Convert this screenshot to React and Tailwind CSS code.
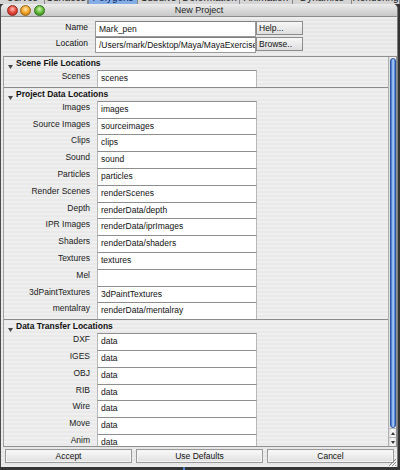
import React from 'react';

// tab strip of the main window, peeking out above the dialog
const tabs = [
  { name: 'Curves', w: 'w-[45px]' },
  { name: 'Surfaces', w: 'w-[43px]' },
  { name: 'Polygons', w: 'w-[50px]', active: true },
  { name: 'Subdivs', w: 'w-[42px]' },
  { name: 'Deformation', w: 'w-[60px]' },
  { name: 'Animation', w: 'w-[53px]' },
  { name: 'Dynamics', w: 'w-[59px]' },
  { name: 'Rendering', w: 'w-[48px]' },
];

const sections = [
  { title: 'Scene File Locations', rows: [['Scenes', 'scenes']] },
  {
    title: 'Project Data Locations',
    rows: [
      ['Images', 'images'],
      ['Source Images', 'sourceimages'],
      ['Clips', 'clips'],
      ['Sound', 'sound'],
      ['Particles', 'particles'],
      ['Render Scenes', 'renderScenes'],
      ['Depth', 'renderData/depth'],
      ['IPR Images', 'renderData/iprImages'],
      ['Shaders', 'renderData/shaders'],
      ['Textures', 'textures'],
      ['Mel', ''],
      ['3dPaintTextures', '3dPaintTextures'],
      ['mentalray', 'renderData/mentalray'],
    ],
  },
  {
    title: 'Data Transfer Locations',
    rows: [
      ['DXF', 'data'],
      ['IGES', 'data'],
      ['OBJ', 'data'],
      ['RIB', 'data'],
      ['Wire', 'data'],
      ['Move', 'data'],
      ['Anim', 'data'],
    ],
  },
];

const pinstripe =
  'bg-[repeating-linear-gradient(180deg,#ededed_0px,#ededed_2px,#e6e6e6_2px,#e6e6e6_4px)]';

function Light({ tone }) {
  return <span className={`block w-[11px] h-[11px] rounded-full border ${tone}`} />;
}

function PathRow({ label, value }) {
  return (
    <div className="flex h-[16.8px]">
      <div className="w-[86px] shrink-0 pt-[1px] text-right leading-[10px] text-[#1a1a1a]">{label}</div>
      <div className="ml-[7px] w-[160px] h-full bg-white border-t border-x border-t-[#8e8e8e] border-x-[#b8b8b8] pl-[3px] pt-[2px] leading-[10px] whitespace-nowrap overflow-hidden">
        {value}
      </div>
    </div>
  );
}

function Section({ title, rows, first }) {
  return (
    <div className={first ? '' : 'border-t border-[#8a8a8a]'}>
      <div className="flex h-[13px] items-start">
        <svg className="ml-[4px] mt-[8px]" width="5" height="4" viewBox="0 0 5 4">
          <polygon points="0,0 5,0 2.5,4" fill="#454545" />
        </svg>
        <span className="ml-[3px] pt-[1px] leading-[10px] font-bold text-[#111]">{title}</span>
      </div>
      {rows.map(([label, value]) => (
        <PathRow key={label} label={label} value={value} />
      ))}
    </div>
  );
}

function FormButton({ children }) {
  return (
    <button className="w-[47px] h-[14px] border border-[#8c8c8c] bg-gradient-to-b from-[#f7f7f7] to-[#dedede] pl-[2px] text-left leading-[12px] text-[8.5px]">
      {children}
    </button>
  );
}

function BarButton({ children }) {
  return (
    <button className="h-[14px] border border-[#9a9a9a] bg-gradient-to-b from-[#fafafa] to-[#e0e0e0] shadow-[inset_0_0_0_1px_#f4f4f4] text-center leading-[12px] text-[8.5px] text-[#111]">
      {children}
    </button>
  );
}

export default function App() {
  return (
    <div className="w-[400px] h-[470px] overflow-hidden bg-[#353535] font-['Liberation_Sans',Arial,sans-serif] text-[8.5px] text-[#111]">
      {/* main window tabs */}
      <div className="h-[4px] overflow-hidden bg-[#d4d4d4]">
        <div className="-mt-[8px] flex h-[12px]">
          {tabs.map((t) => (
            <span
              key={t.name}
              className={`${t.w} shrink-0 text-center text-[10px] leading-[12px] border-r border-[#888] ${
                t.active ? 'bg-[#86aee6] text-[#0c2a66] border-l border-[#3b6cc4]' : 'text-[#222]'
              }`}
            >
              {t.name}
            </span>
          ))}
        </div>
      </div>

      <div className="w-[398px] h-[463px] flex flex-col rounded-t-[5px] overflow-hidden border-l border-r border-l-[#4a4a4a] border-r-[#7c7c7c] bg-[#e8e8e8]">
        {/* title bar */}
        <div className="h-[13px] shrink-0 grid grid-cols-[1fr_auto_1fr] items-center border-b border-[#8c8c8c] bg-gradient-to-b from-[#ececec] to-[#c8c8c8]">
          <div className="flex items-center pl-[6px]">
            <Light tone="border-[#8e2a22] bg-[radial-gradient(circle_at_50%_35%,#ffc2b8_0%,#e6463a_50%,#a3201a_100%)]" />
            <span className="ml-[2px]">
              <Light tone="border-[#9a6410] bg-[radial-gradient(circle_at_50%_35%,#ffe7ad_0%,#f2a52a_50%,#b06a0c_100%)]" />
            </span>
            <span className="ml-[3px]">
              <Light tone="border-[#2f6e1a] bg-[radial-gradient(circle_at_50%_35%,#d2f5ae_0%,#62b93a_50%,#2f7a18_100%)]" />
            </span>
          </div>
          <span className="text-[9px] leading-[12px] text-[#1e1e1e]">New Project</span>
          <div />
        </div>

        <div className={`flex-1 flex flex-col ${pinstripe}`}>
          {/* name / location */}
          <div className="pt-[4px] flex flex-col">
            <div className="flex h-[16px]">
              <div className="w-[87px] pt-[1px] text-right leading-[10px]">Name</div>
              <div className="ml-[7px] w-[161px] h-[16px] bg-white border border-[#9a9a9a] border-t-[#808080] pl-[3px] pt-[2px] leading-[10px]">
                Mark_pen
              </div>
              <FormButton>Help...</FormButton>
            </div>
            <div className="flex h-[16px]">
              <div className="w-[87px] pt-[1px] text-right leading-[10px]">Location</div>
              <div className="ml-[7px] w-[161px] h-[16px] bg-white border border-[#9a9a9a] border-t-[#808080] pl-[3px] pt-[2px] leading-[10px] whitespace-nowrap overflow-hidden">
                /Users/mark/Desktop/Maya/MayaExercises
              </div>
              <FormButton>Browse..</FormButton>
            </div>
          </div>

          {/* scrolling path list */}
          <div className="mt-[3px] ml-[2px] h-[391px] flex border-t border-b border-l border-r border-[#8f8f8f] border-l-[#a0a0a0]">
            <div className="flex-1 overflow-hidden bg-[repeating-linear-gradient(180deg,#efefef_0px,#efefef_2px,#e9e9e9_2px,#e9e9e9_4px)]">
              {sections.map((s, i) => (
                <Section key={s.title} title={s.title} rows={s.rows} first={i === 0} />
              ))}
            </div>
            <div className="w-[8px] flex flex-col border-l border-[#b0b0b0] bg-gradient-to-r from-[#dcdcdc] via-[#fbfbfb] to-[#e4e4e4]">
              <div className="mt-[1px] mx-[0.5px] h-[370px] rounded-full border border-[#2b559f] bg-[linear-gradient(90deg,#3566c4_0%,#86b2ec_35%,#b8d6f7_55%,#6c9ee6_80%,#3a6cc8_100%)]" />
              <div className="flex-1" />
              <div className="h-[9px] border-t border-[#b5b5b5] flex items-center justify-center">
                <svg width="4" height="3" viewBox="0 0 4 3">
                  <polygon points="2,0 4,3 0,3" fill="#333" />
                </svg>
              </div>
              <div className="h-[9px] border-t border-[#b5b5b5] flex items-center justify-center">
                <svg width="4" height="3" viewBox="0 0 4 3">
                  <polygon points="0,0 4,0 2,3" fill="#333" />
                </svg>
              </div>
            </div>
          </div>

          {/* bottom buttons */}
          <div className="relative flex-1 grid grid-cols-3 gap-[4px] pl-[4px] pr-[3px] pt-[2px] items-start">
            <BarButton>Accept</BarButton>
            <BarButton>Use Defaults</BarButton>
            <BarButton>Cancel</BarButton>
            <svg className="absolute right-0 bottom-0" width="10" height="10" viewBox="0 0 10 10">
              <path d="M9 2 L2 9 M9 5 L5 9 M9 8 L8 9" stroke="#8a8a8a" strokeWidth="1" />
              <path d="M10 3 L3 10 M10 6 L6 10" stroke="#ffffff" strokeWidth="1" />
            </svg>
          </div>
        </div>
      </div>

      {/* desktop below the dialog */}
      <div className="h-[3px] flex">
        <span className="ml-[183px] w-[2px] h-full bg-[#4d7fd6]" />
      </div>
    </div>
  );
}
